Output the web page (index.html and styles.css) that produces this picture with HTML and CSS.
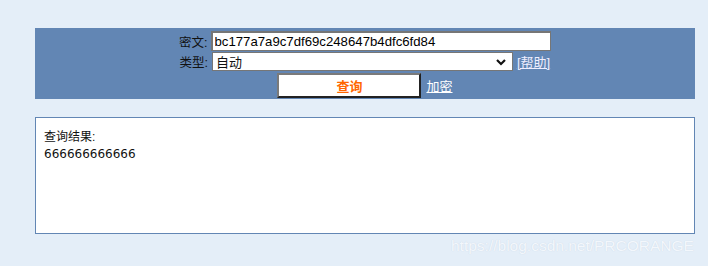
FILE: index.html
```html
<!DOCTYPE html>
<html lang="zh-CN">
<head>
  <meta charset="UTF-8">
  <title>查询</title>
  <link rel="stylesheet" href="styles.css">
</head>
<body>
  <div class="page">
    <form class="panel" onsubmit="return false">
      <div class="row row-hash">
        <label class="label" for="hash">密文:</label>
        <input class="hash-input" id="hash" type="text" value="bc177a7a9c7df69c248647b4dfc6fd84">
      </div>
      <div class="row row-type">
        <label class="label" for="type">类型:</label>
        <div class="select">
          <span>自动</span>
          <svg class="chevron" width="10" height="8" viewBox="0 0 10 8"><path d="M1 2 L5 6 L9 2" fill="none" stroke="#111" stroke-width="2.2"/></svg>
        </div>
        <a class="link help" href="#">[帮助]</a>
      </div>
      <div class="row">
        <button class="search-btn" type="submit">查询</button>
        <a class="link" href="#">加密</a>
      </div>
    </form>

    <div class="result">
      <div class="result-title">查询结果:</div>
      <div class="result-value">666666666666</div>
    </div>
  </div>

  <div class="watermark">https://blog.csdn.net/PRCORANGE</div>
</body>
</html>
```

FILE: styles.css
```css
* { box-sizing: border-box; }

body {
  margin: 0;
  padding: 0;
  background: #e4eef8;
  font-family: 'Liberation Sans', 'Noto Sans CJK SC', sans-serif;
  color: #111;
  height: 266px;
  overflow: hidden;
}

.page {
  width: 660px;
  margin-left: 35px;
  padding-top: 28px;
}

.panel {
  background: #6286b4;
  height: 71px;
  padding-top: 3px;
  display: flex;
  flex-direction: column;
  align-items: center;
  margin: 0;
}

.row {
  display: flex;
  align-items: center;
}

.row-hash {
  margin-right: 4px;
}

.row-type {
  margin-right: 4px;
}

.label {
  font-size: 12.5px;
  width: 35px;
  text-align: right;
  padding-right: 3px;
  color: #111;
}

.hash-input {
  width: 340px;
  height: 20px;
  border: 1px solid #767676;
  border-top-width: 2px;
  border-left-width: 2px;
  padding: 0 2px;
  font-family: 'Liberation Sans', sans-serif;
  font-size: 13.2px;
  color: #000;
  outline: none;
}

.select {
  width: 301px;
  height: 19px;
  margin-top: 1px;
  margin-left: 1px;
  background: #fff;
  border: 1px solid #767676;
  display: flex;
  align-items: center;
  justify-content: space-between;
  padding: 0 6px 0 3px;
  font-size: 13px;
}

.chevron { display: block; }

.link {
  color: #fff;
  font-size: 13px;
  text-decoration: underline;
}

.help {
  margin-left: 4px;
  color: #eef;
}

.search-btn {
  width: 144px;
  height: 25px;
  margin-top: 2px;
  background: #fff;
  border: 2px solid;
  border-color: #7a7a7a #222 #222 #7a7a7a;
  color: #ff6600;
  font-weight: bold;
  font-size: 13px;
  font-family: 'Liberation Sans', 'Noto Sans CJK SC', sans-serif;
  padding: 0;
}

.search-btn + .link {
  margin-left: 5px;
  margin-top: 2px;
}

.result {
  margin-top: 18px;
  height: 117px;
  background: #fff;
  border: 1px solid #6286b4;
  padding: 11px 8px;
}

.result-title {
  font-size: 12px;
  line-height: 16px;
}

.result-value {
  line-height: 18px;
  font-family: 'DejaVu Sans', 'Liberation Sans', sans-serif;
  font-size: 12px;
}

.watermark {
  position: absolute;
  left: 451px;
  top: 237px;
  font-size: 15.5px;
  color: #f3f7fc;
  text-shadow: 0 0 1px rgba(90, 110, 140, 0.2);
  font-family: 'Liberation Sans', sans-serif;
}
```
